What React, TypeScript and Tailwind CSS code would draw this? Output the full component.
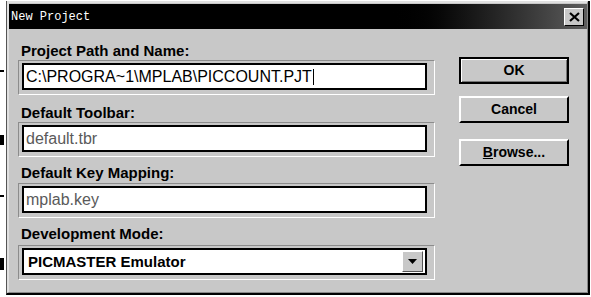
import React from 'react';

const font = { fontFamily: '"Liberation Sans", Arial, sans-serif' };

function Field({ value, muted, bold, select }: { value: string; muted?: boolean; bold?: boolean; select?: boolean }) {
  return (
    <div className="w-[417px] h-[35px] border border-t-[#8c8c8c] border-l-[#8c8c8c] border-b-white border-r-white pt-[2px] pl-[3px] pr-[7px] pb-[4px]">
      <div className="h-full border-2 border-black bg-white flex items-center pl-[2px] pr-[2px]">
        <span
          className={`flex-1 leading-none ${muted ? 'text-[#5a5a5a]' : 'text-black'} ${bold ? 'font-bold text-[15px] pl-[2px]' : 'text-[16px]'}`}
        >
          {value}
          {!muted && !bold && !select && <span className="inline-block w-[1px] h-[16px] bg-black align-[-3px] ml-[1px]" />}
        </span>
        {select && (
          <div className="w-[21px] h-[21px] bg-[#c8c8c8] border border-t-white border-l-white border-b-[#555] border-r-[#555] flex items-center justify-center">
            <svg width="9" height="5" viewBox="0 0 9 5">
              <polygon points="0,0 9,0 4.5,5" fill="black" />
            </svg>
          </div>
        )}
      </div>
    </div>
  );
}

function Label({ children }: { children: React.ReactNode }) {
  return <div className="text-[15px] font-bold text-black leading-none pl-[3px] h-[16px] flex items-center">{children}</div>;
}

function Btn({ children, primary }: { children: React.ReactNode; primary?: boolean }) {
  return (
    <div
      className={`w-[110px] h-[27px] bg-[#c8c8c8] flex items-center justify-center text-[14px] font-bold text-black ${
        primary
          ? 'border-2 border-black shadow-[inset_1px_1px_0_#fff,inset_-1px_-1px_0_#777]'
          : 'border-t-2 border-l-2 border-t-white border-l-white border-b-2 border-r-2 border-b-black border-r-black'
      }`}
    >
      {children}
    </div>
  );
}

export default function App() {
  return (
    <div className="w-[591px] h-[297px] bg-white relative overflow-hidden" style={font}>
      {/* bits of the window behind */}
      <div className="absolute left-0 top-[70px] w-[4px] h-[2px] bg-black" />
      <div className="absolute left-0 top-[135px] w-[4px] h-[10px] bg-black" />
      <div className="absolute left-0 top-[195px] w-[4px] h-[2px] bg-black" />
      <div className="absolute left-0 top-[258px] w-[4px] h-[12px] bg-black" />

      <div className="absolute left-[6px] top-[1px] w-[584px] h-[294px] border-l border-l-[#555] border-r-2 border-r-black border-b-2 border-b-black">
        <div className="h-full border-t-2 border-l-2 border-t-[#e0e0e0] border-l-[#e0e0e0] border-r border-r-[#888] border-b border-b-[#888] bg-[#c8c8c8] flex flex-col">
          {/* title bar */}
          <div className="h-[25px] bg-gradient-to-r from-black from-[65%] to-[#5e5e5e] flex items-center pl-[2px] pr-[3px] mt-px">
            <span className="flex-1 text-white text-[12px]" style={{ fontFamily: '"Liberation Mono", "DejaVu Sans Mono", monospace' }}>
              New Project
            </span>
            <div className="w-[20px] h-[18px] bg-[#c8c8c8] border border-t-white border-l-white border-b-black border-r-black flex items-center justify-center">
              <svg width="11" height="10" viewBox="0 0 11 10">
                <path d="M1 1 L10 9 M10 1 L1 9" stroke="black" strokeWidth="2.2" />
              </svg>
            </div>
          </div>

          <div className="flex pl-[9px] pt-[13px]">
            <div className="flex flex-col">
              <Label>Project Path and Name:</Label>
              <div className="mt-[2px]">
                <Field value="C:\PROGRA~1\MPLAB\PICCOUNT.PJT" />
              </div>
              <div className="mt-[9px]">
                <Label>Default Toolbar:</Label>
              </div>
              <div className="mt-[2px]">
                <Field value="default.tbr" muted />
              </div>
              <div className="mt-[7px]">
                <Label>Default Key Mapping:</Label>
              </div>
              <div className="mt-[3px]">
                <Field value="mplab.key" muted />
              </div>
              <div className="mt-[7px]">
                <Label>Development Mode:</Label>
              </div>
              <div className="mt-[4px]">
                <Field value="PICMASTER Emulator" bold select />
              </div>
            </div>

            <div className="flex flex-col ml-[24px] mt-[15px] gap-[12px]">
              <Btn primary>OK</Btn>
              <Btn>Cancel</Btn>
              <div className="mt-[4px]">
                <Btn>
                  <span>
                    <span className="underline">B</span>rowse...
                  </span>
                </Btn>
              </div>
            </div>
          </div>
        </div>
      </div>
    </div>
  );
}
